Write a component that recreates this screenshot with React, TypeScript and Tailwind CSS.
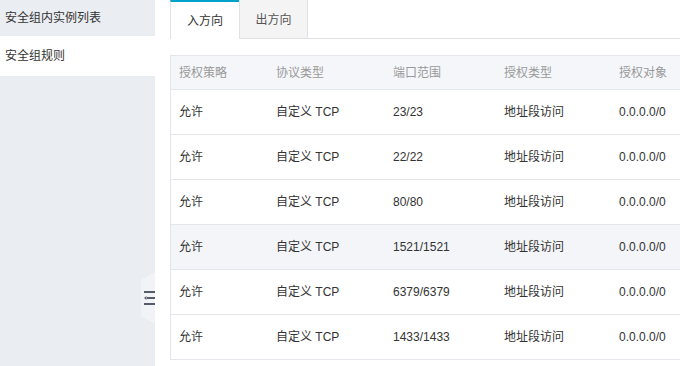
import React from 'react';

const rows = [
    { port: '23/23', hover: false },
    { port: '22/22', hover: false },
    { port: '80/80', hover: false },
    { port: '1521/1521', hover: true },
    { port: '6379/6379', hover: false },
    { port: '1433/1433', hover: false },
];

const font = { fontFamily: '"Liberation Sans", "Noto Sans CJK SC", sans-serif' };

const CollapseHandle: React.FC = () => (
    <div className="absolute right-0 top-[272px] w-[14px] h-[52px]">
        <svg width="14" height="52" viewBox="0 0 14 52" className="absolute inset-0">
            <polygon points="14,0 14,52 0,44 0,8" fill="#f2f3f6" />
        </svg>
        <svg width="12" height="14" viewBox="0 0 12 14" className="absolute left-[2px] top-[19px]">
            <rect x="1" y="0" width="11" height="2" fill="#545b69" />
            <rect x="4" y="6" width="8" height="2" fill="#545b69" />
            <polygon points="1,7 3.5,5 3.5,9" fill="#545b69" />
            <rect x="1" y="12" width="11" height="2" fill="#545b69" />
        </svg>
    </div>
);

const App: React.FC = () => {
    return (
        <div className="flex w-[680px] h-[366px] overflow-hidden bg-white text-[12px]" style={font}>
            <div className="relative w-[155px] shrink-0 bg-[#eaedf1]">
                <div className="h-[36px] flex items-center pl-[5px] text-[#333]">安全组内实例列表</div>
                <div className="h-[40px] flex items-center pl-[5px] bg-white text-[#333]">安全组规则</div>
                <CollapseHandle />
            </div>

            <div className="flex-1 min-w-0 pl-[15px] overflow-hidden">
                <div className="flex h-[39px] border-b border-[#dfe1e5]">
                    <div className="w-[69px] h-[39px] -mb-px flex items-center justify-center pt-px bg-white border-t-2 border-t-[#00a2ca] border-l border-[#dfe1e5] text-[#333]">
                        入方向
                    </div>
                    <div className="w-[69px] flex items-center justify-center pt-px bg-[#f4f4f4] border-l border-r border-[#dfe1e5] text-[#555]">
                        出方向
                    </div>
                </div>

                <div className="mt-[16px] w-[560px] border-l border-t border-[#e3e6eb]">
                    <div className="flex h-[34px] items-center bg-[#f5f6fa] border-b border-[#e3e6eb] text-[#999]">
                        <div className="w-[97px] pl-[8px]">授权策略</div>
                        <div className="w-[117px] pl-[8px]">协议类型</div>
                        <div className="w-[111px] pl-[8px]">端口范围</div>
                        <div className="w-[115px] pl-[8px]">授权类型</div>
                        <div className="flex-1 pl-[8px]">授权对象</div>
                    </div>
                    {rows.map((r) => (
                        <div
                            key={r.port}
                            className={`flex h-[45px] items-center border-b border-[#e3e6eb] text-[#333] ${r.hover ? 'bg-[#f3f5f8]' : 'bg-white'}`}
                        >
                            <div className="w-[97px] pl-[8px]">允许</div>
                            <div className="w-[117px] pl-[8px]">自定义 TCP</div>
                            <div className="w-[111px] pl-[8px]">{r.port}</div>
                            <div className="w-[115px] pl-[8px]">地址段访问</div>
                            <div className="flex-1 pl-[8px]">0.0.0.0/0</div>
                        </div>
                    ))}
                </div>
            </div>
        </div>
    );
};

export default App;
